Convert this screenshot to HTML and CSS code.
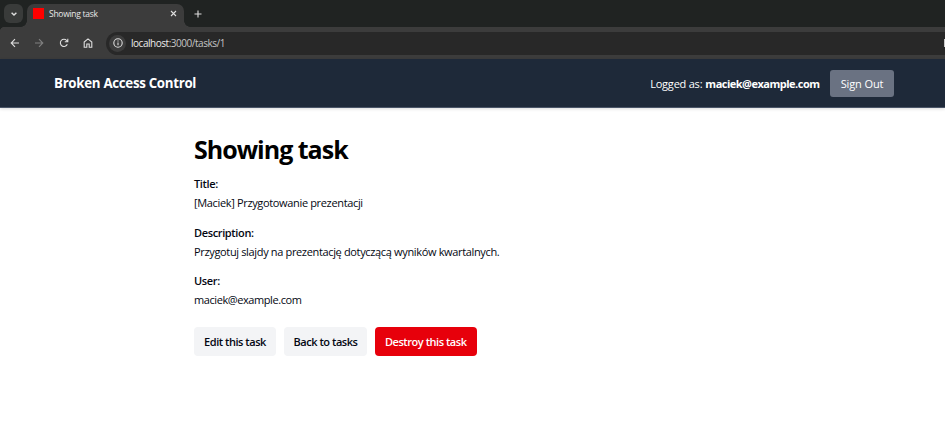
FILE: index.html
```html
<!DOCTYPE html>
<html lang="pl">
<head>
<meta charset="utf-8">
<title>Showing task</title>
<link rel="stylesheet" href="styles.css">
</head>
<body>
<div class="tabstrip">
  <div class="tab-search"><svg width="8" height="8" viewBox="0 0 8 8"><path d="M1.6 2.7 4 5.1 6.4 2.7"/></svg></div>
  <div class="tab">
    <span class="favicon"></span>
    <span class="tab-title">Showing task</span>
    <svg class="close" width="7" height="7" viewBox="0 0 7 7"><path d="M1 1 6 6M6 1 1 6"/></svg>
  </div>
  <svg class="plus" width="8" height="8" viewBox="0 0 8 8"><path d="M4 .5V7.5M.5 4H7.5"/></svg>
</div>
<div class="toolbar">
  <svg width="10" height="10" viewBox="0 0 10 10"><path d="M9 5H1.4M5 1.2 1.2 5 5 8.8"/></svg>
  <svg class="dim" width="10" height="10" viewBox="0 0 10 10"><path d="M1 5H8.6M5 1.2 8.8 5 5 8.8"/></svg>
  <svg width="10" height="10" viewBox="0 0 10 10"><path d="M8.3 6.2A3.6 3.6 0 1 1 7.7 2.5L8.7 3.7M8.8 .8V3.8H5.8"/></svg>
  <svg width="10" height="10" viewBox="0 0 10 10"><path d="M1.2 4 5 .9 8.8 4V9.3H6.2V6H3.8V9.3H1.2Z"/></svg>
  <div class="address">
    <span class="info"><svg width="10" height="10" viewBox="0 0 10 10"><circle cx="5" cy="5" r="4.2"/><path d="M5 4.5V7.3M5 2.5V3.5"/></svg></span>
    <span class="url">localhost<span class="path">:3000/tasks/1</span></span>
    <span class="edge"></span>
  </div>
</div>
<header class="navbar">
  <div class="nav-inner">
    <span class="brand">Broken Access Control</span>
    <div class="session">
      <span class="logged">Logged as:</span>
      <strong class="account">maciek@example.com</strong>
      <button class="sign-out">Sign Out</button>
    </div>
  </div>
</header>
<main class="content">
  <h1>Showing task</h1>
  <dl>
    <dt>Title:</dt>
    <dd>[Maciek] Przygotowanie prezentacji</dd>
    <dt>Description:</dt>
    <dd>Przygotuj slajdy na prezentację dotyczącą wyników kwartalnych.</dd>
    <dt>User:</dt>
    <dd class="email">maciek@example.com</dd>
  </dl>
  <div class="actions">
    <a class="btn edit">Edit this task</a>
    <a class="btn back">Back to tasks</a>
    <a class="btn destroy">Destroy this task</a>
  </div>
</main>
</body>
</html>
```
FILE: styles.css
```css
* { box-sizing: border-box; }
body { margin: 0; height: 431px; overflow: hidden; background: #fff; color: #030712; font: 11px/19px "Segoe UI", "Open Sans", "Noto Sans", sans-serif; white-space: nowrap; }
svg { display: block; flex: none; fill: none; stroke: #dedede; stroke-width: 1.1; }

/* Browser chrome */
.tabstrip { display: flex; height: 27px; background: #202322; padding-left: 4px; }
.tab-search { width: 19px; height: 19px; margin-top: 4px; border-radius: 6px; background: #393b3a; display: grid; place-items: center; }
.tab-search svg { stroke-width: 1.4; }
.tab { position: relative; display: flex; align-items: center; width: 157px; height: 23px; margin: 4px 0 0 4px; padding: 0 7px 4px 6px; border-radius: 7px 7px 0 0; background: #3c3c3c; }
.tab::before, .tab::after { content: ""; position: absolute; bottom: 0; width: 6px; height: 6px; }
.tab::before { left: -6px; background: radial-gradient(circle at 0 0, transparent 5.5px, #3c3c3c 6px); }
.tab::after { right: -6px; background: radial-gradient(circle at 100% 0, transparent 5.5px, #3c3c3c 6px); }
.favicon { width: 11px; height: 11px; background: #f00; margin-right: 5px; }
.tab-title { color: #e8e8e8; font-size: 8.5px; letter-spacing: -.27px; }
.close { margin-left: auto; }
.plus { margin: 10px 0 0 10px; }
.toolbar { display: flex; align-items: center; gap: 14.3px; height: 32px; padding-left: 10px; background: radial-gradient(circle at 5px 5px, #3c3c3c 5px, #202322 5.5px) 0 0 / 5px 5px no-repeat, #3c3c3c; }
.toolbar .dim { stroke: #808080; }
.address { flex: 1; display: flex; align-items: center; height: 23px; margin-left: -1.2px; padding-left: 3px; border-radius: 12px 0 0 12px; background: #282828; }
.info { width: 17px; height: 17px; border-radius: 50%; background: #3c3c3c; display: grid; place-items: center; }
.url { margin-left: 5px; color: #ececec; font-size: 10px; letter-spacing: -.47px; }
.path { color: #c4c4c4; }
.edge { width: 1px; height: 8px; margin-left: auto; background: #c9c9c9; }

/* Application header */
.navbar { height: 49px; background: #1e2939; border-bottom: 1px solid #4a5568; box-shadow: 0 1px 3px rgba(0,0,0,.15); color: #fff; }
.nav-inner { display: flex; align-items: center; justify-content: space-between; height: 48px; margin: 0 51px 0 54px; }
.brand { padding-top: 1px; font-size: 13.3px; font-weight: 700; letter-spacing: -.3px; }
.session { display: flex; align-items: center; }
.logged { margin-right: 3px; letter-spacing: -.22px; }
.account { margin-right: 10.5px; letter-spacing: -.5px; }
.sign-out { width: 64px; height: 27px; margin-top: 1px; padding: 0; border: 0; border-radius: 3px; background: #6a7282; color: #fff; font: inherit; letter-spacing: -.12px; }

/* Task details */
.content { margin-left: 194px; padding-top: 25px; }
h1 { margin: 0; font-size: 25px; line-height: 32px; font-weight: 700; letter-spacing: -1px; color: #000; }
dl { margin: 9px 0 0; }
dt { font-weight: 600; letter-spacing: -.36px; }
dd { margin: 0 0 10.6px; letter-spacing: -.345px; }
.email { letter-spacing: -.42px; }
.actions { display: flex; gap: 8px; margin-top: 17.7px; }
.btn { display: flex; align-items: center; justify-content: center; height: 29.5px; border-radius: 4px; background: #f3f4f6; font-weight: 600; letter-spacing: -.46px; }
.edit { width: 82px; }
.back { width: 83px; }
.destroy { width: 101.5px; background: #e7000b; color: #fff; }
```
